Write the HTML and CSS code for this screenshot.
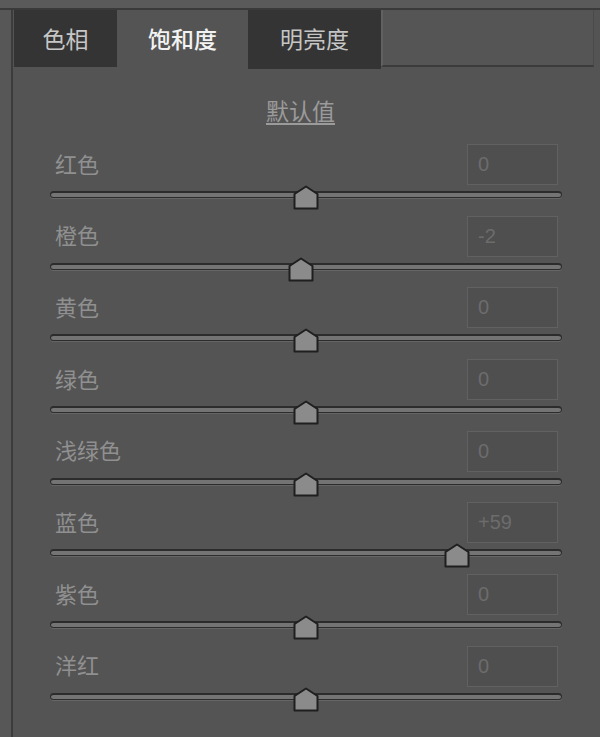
FILE: index.html
```html
<!DOCTYPE html>
<html lang="zh-CN">
<head>
    <meta charset="UTF-8">
    <title>HSL 饱和度</title>
    <link rel="stylesheet" href="styles.css">
</head>
<body>
    <div class="topbar"></div>
    <div class="panel">
        <div class="tabs">
            <div class="tab">色相</div>
            <div class="tab active">饱和度</div>
            <div class="tab tab-wide">明亮度</div>
            <div class="tab-fill"></div>
        </div>

        <div class="defaults"><a href="#">默认值</a></div>

        <div class="rows" id="rows"></div>
    </div>

    <script>
        // colour sliders, value range -100..100
        var colours = [
            ['红色', 0], ['橙色', -2], ['黄色', 0], ['绿色', 0],
            ['浅绿色', 0], ['蓝色', 59], ['紫色', 0], ['洋红', 0]
        ];
        var rows = document.getElementById('rows');
        colours.forEach(function(c) {
            var v = c[1];
            var text = v > 0 ? '+' + v : String(v);
            var pct = (v + 100) / 2;
            var row = document.createElement('div');
            row.className = 'row';
            row.innerHTML =
                '<div class="row-head">' +
                    '<span class="label">' + c[0] + '</span>' +
                    '<div class="value">' + text + '</div>' +
                '</div>' +
                '<div class="slider">' +
                    '<div class="track"></div>' +
                    '<svg class="thumb" style="left:' + pct + '%" width="26" height="25" viewBox="0 0 26 25">' +
                        '<path d="M1.5 9 L13 1.5 L24.5 9 L24.5 23.5 L1.5 23.5 Z" fill="#8b8b8b" stroke="#1f1f1f" stroke-width="2" stroke-linejoin="round"/>' +
                    '</svg>' +
                '</div>';
            rows.appendChild(row);
        });
    </script>
</body>
</html>
```

FILE: styles.css
```css
body {
    margin: 0;
    background-color: #575757;
    font-family: "Noto Sans CJK SC", "Noto Sans", sans-serif;
    height: 737px;
    overflow: hidden;
}
.topbar {
    height: 8px;
    background-color: #5a5a5a;
    border-bottom: 2px solid #3a3a3a;
}
.panel {
    margin-left: 11px;
    border-left: 2px solid #3c3c3c;
    background-color: #545454;
    height: 727px;
}
.tabs {
    display: flex;
    height: 57px;
    padding-left: 1px;
}
.tab {
    width: 103px;
    background-color: #343434;
    color: #c6c6c6;
    font-size: 23px;
    display: flex;
    align-items: center;
    justify-content: center;
    height: 57px;
    padding-bottom: 1px;
    box-sizing: border-box;
}
.tab.active {
    width: 131px;
    background-color: #545454;
    color: #f2f2f2;
    font-weight: 500;
}
.tab.tab-wide {
    width: 133px;
    height: 59px;
    padding-bottom: 3px;
}
.tab-fill {
    flex-grow: 1;
    margin-right: 6px;
    border-left: 2px solid #616161;
    border-right: 1px solid #4a4a4a;
    border-bottom: 2px solid #3b3b3b;
    background-color: #555555;
}
.defaults {
    text-align: center;
    padding: 29px 12px 0 0;
    line-height: 28px;
    margin-bottom: 20px;
    font-size: 23px;
}
.defaults a {
    color: #9b9b9b;
    text-decoration: underline;
    text-underline-offset: 3px;
}
.rows {
    padding: 0 38px 0 37px;
}
.row {
    height: 71.7px;
}
.row-head {
    display: flex;
    align-items: center;
    justify-content: space-between;
    height: 41px;
}
.label {
    padding: 0 0 4px 5px;
    color: #909090;
    font-size: 22px;
}
.value {
    width: 79px;
    height: 39px;
    margin-right: 4px;
    padding-left: 10px;
    border: 1px solid #616161;
    background-color: #4f4f4f;
    color: #6c6c6c;
    font-family: "Liberation Sans", Arial, sans-serif;
    font-size: 20px;
    line-height: 39px;
}
.slider {
    position: relative;
    margin-top: 6px;
    height: 10px;
}
.track {
    height: 4px;
    border: 1.5px solid #2c2c2c;
    border-top-width: 2.5px;
    border-radius: 5px;
    background-color: #747474;
    box-shadow: 0 1px 0 #666666;
}
.thumb {
    position: absolute;
    top: -6px;
    margin-left: -13px;
}
```
